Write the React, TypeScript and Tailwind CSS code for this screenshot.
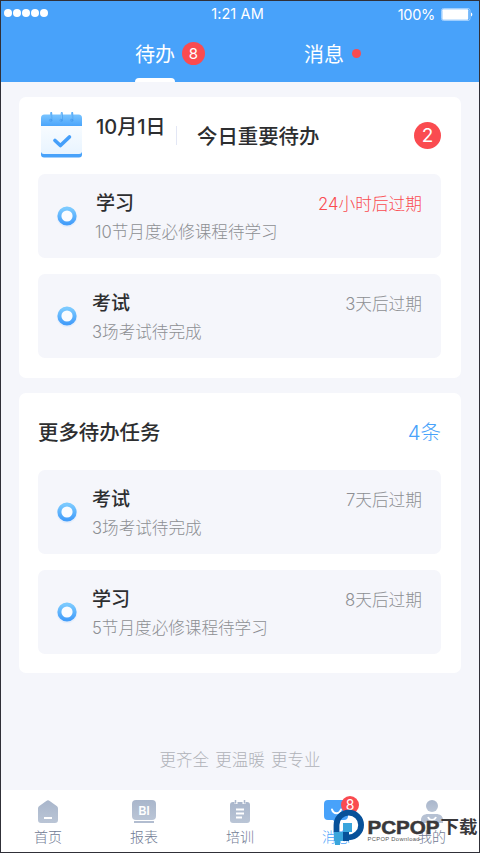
type Task = {
  title: string;
  desc: string;
  due: string;
  urgent?: boolean;
  indent?: boolean;
};

const TODAY: Task[] = [
  {
    title: "学习",
    desc: "10节月度必修课程待学习",
    due: "24小时后过期",
    urgent: true,
    indent: true,
  },
  { title: "考试", desc: "3场考试待完成", due: "3天后过期" },
];

const MORE: Task[] = [
  { title: "考试", desc: "3场考试待完成", due: "7天后过期" },
  { title: "学习", desc: "5节月度必修课程待学习", due: "8天后过期" },
];

const StatusBar = () => (
  <div className="grid h-[22px] grid-cols-3 items-center pl-[3px] pr-1.5 text-[15px] text-white">
    <div className="flex gap-px">
      {[0, 1, 2, 3, 4].map((i) => (
        <span key={i} className="h-2 w-2 rounded-full bg-white" />
      ))}
    </div>
    <span className="pr-0.5 text-center text-[14.5px] tracking-[0.1px]">1:21 AM</span>
    <div className="flex items-center justify-end gap-1.5 pt-[3px]">
      <span className="text-[14.5px] tracking-[-0.3px]">100%</span>
      <svg width="32" height="14" viewBox="0 0 32 14" aria-hidden="true">
        <rect x="0.5" y="0.5" width="28.5" height="12" rx="2" fill="none" stroke="#b5d9ff" strokeWidth="0.8" />
        <rect x="1.3" y="1.2" width="26" height="10.6" rx="1" fill="#fff" />
        <path d="M30 4.5c1.8.6 1.8 3.400 0 4z" fill="#fff" />
      </svg>
    </div>
  </div>
);

const CalendarIcon = () => (
  <svg width="42" height="46" viewBox="0 0 42 46" aria-hidden="true">
    <defs>
      <linearGradient id="calTop" x1="0" y1="0" x2="0" y2="1">
        <stop offset="0" stopColor="#79c4ff" />
        <stop offset="1" stopColor="#4ba5fb" />
      </linearGradient>
      <linearGradient id="calBody" x1="0" y1="0" x2="0" y2="1">
        <stop offset="0" stopColor="#f8fcff" />
        <stop offset="1" stopColor="#e8f4ff" />
      </linearGradient>
    </defs>
    <path d="M0 40h41v2.500a3 3 0 0 1-3 3H3a3 3 0 0 1-3-3z" fill="#48a2fa" />
    <path d="M0 13h41v26a3 3 0 0 1-3 3H3a3 3 0 0 1-3-3z" fill="url(#calBody)" />
    <path d="M0 14V6a3.500 3.500 0 0 1 3.500-3.500h34A3.500 3.500 0 0 1 41 6v8z" fill="url(#calTop)" />
    {[8, 18.5, 29].map((x) => (
      <g key={x} transform={`translate(${x} 0)`} fill="none" strokeLinecap="round">
        <path d="M2.300 1v7.500" stroke="#4a9ff0" strokeWidth="1.800" />
        <path d="M1.900 1v5.500" stroke="#74c0ff" strokeWidth="1.300" />
        <circle cx="1.600" cy="8.300" r="1.200" stroke="#4a9ff0" strokeWidth="0.700" />
      </g>
    ))}
    <path d="M14 28.500l5.400 5 9-8.500" fill="none" stroke="#459ffa" strokeWidth="3.700" strokeLinejoin="round" strokeLinecap="round" />
  </svg>
);

const Ring = () => (
  <svg width="24" height="24" viewBox="0 0 24 24" aria-hidden="true">
    <defs>
      <linearGradient id="ring" x1="0" y1="0" x2="0" y2="1">
        <stop offset="0" stopColor="#7bcaff" />
        <stop offset="1" stopColor="#449efa" />
      </linearGradient>
    </defs>
    <circle cx="12" cy="13" r="8.500" fill="none" stroke="#449efa" strokeOpacity="0.080" strokeWidth="3.500" />
    <circle cx="12" cy="12" r="7.600" fill="#fafcff" stroke="url(#ring)" strokeWidth="4" />
  </svg>
);

const TaskRow = ({ task }: { task: Task }) => (
  <div className="flex h-[84px] items-start rounded-[7px] bg-[#f5f6fb] pl-[17px] pr-[19px]">
    <div className="pt-[30px]">
      <Ring />
    </div>
    <div className="ml-[13px] flex-1 pt-4">
      <div className="flex items-center justify-between">
        <h3
          className={`text-[19px] font-medium leading-7 text-[#2d2e30] ${task.indent ? "pl-1" : ""}`}
        >
          {task.title}
        </h3>
        <span
          className={`text-[16.7px] font-light leading-7 ${task.urgent ? "text-[#fa4b50]" : "text-[#8d8f93]"}`}
        >
          {task.due}
        </span>
      </div>
      <p
        className={`text-[16.6px] font-light leading-[29px] text-[#8d8f93] ${task.indent ? "pl-[3px]" : ""}`}
      >
        {task.desc}
      </p>
    </div>
  </div>
);

const HomeIcon = () => (
  <svg width="24" height="24" viewBox="0 0 24 24" aria-hidden="true">
    <path d="M10.300 1a2.800 2.800 0 0 1 3.400 0l7 5A3 3 0 0 1 22 8.500V20a3 3 0 0 1-3 3H5a3 3 0 0 1-3-3V8.500A3 3 0 0 1 3.300 6z" fill="url(#nav)" />
    <path d="M8 18h8" stroke="#fff" strokeWidth="2" />
  </svg>
);

const ReportIcon = () => (
  <svg width="24" height="24" viewBox="0 0 24 24" aria-hidden="true">
    <rect x="0" y="0" width="24" height="20" rx="4" fill="url(#nav)" />
    <rect x="2" y="21" width="20" height="2" fill="#b2bdd0" />
    <text x="12" y="14.800" textAnchor="middle" fontFamily="Liberation Sans" fontSize="13" fontWeight="bold" textLength="11" lengthAdjust="spacingAndGlyphs" fill="#fff">
      BI
    </text>
  </svg>
);

const TrainingIcon = () => (
  <svg width="24" height="24" viewBox="0 0 24 24" aria-hidden="true">
    <rect x="2" y="2" width="20" height="21" rx="3" fill="url(#nav)" />
    <path d="M8 0v4M16 0v4" stroke="#fff" strokeWidth="3" />
    <path d="M7.500 0v3.500M16.500 0v3.500" stroke="#acb8cc" strokeWidth="1.500" />
    <path d="M8 9.500h8M8 13.500h8M8 17.500h6" stroke="#fff" strokeWidth="1.800" />
  </svg>
);

const MessageIcon = () => (
  <svg width="24" height="24" viewBox="0 0 24 24" aria-hidden="true">
    <path d="M4 0h16a4 4 0 0 1 4 4v12a4 4 0 0 1-4 4h-5l-3 3-3-3H4a4 4 0 0 1-4-4V4a4 4 0 0 1 4-4z" fill="#48a2fa" />
    <path d="M8 9.500c1.500 5 7.500 5 9 0" fill="none" stroke="#fff" strokeWidth="2" strokeLinecap="round" />
  </svg>
);

const ProfileIcon = () => (
  <svg width="24" height="24" viewBox="0 0 24 24" aria-hidden="true">
    <circle cx="12" cy="6" r="6" fill="url(#nav)" />
    <path d="M1 23v-3c0-4 3-6 7-6h8c4 0 7 2 7 6v3z" fill="#b6c1d3" />
    <path d="M8 17c1.500 4 6.500 4 8 0" fill="none" stroke="#fff" strokeWidth="1.800" />
  </svg>
);

const NAV = [
  { label: "首页", icon: HomeIcon },
  { label: "报表", icon: ReportIcon },
  { label: "培训", icon: TrainingIcon },
  { label: "消息", icon: MessageIcon, active: true, badge: 8 },
  { label: "我的", icon: ProfileIcon },
];

const TabBar = () => (
  <nav className="-mx-px grid h-[62px] grid-cols-5 bg-white pt-2.5">
    {NAV.map(({ label, icon: Icon, active, badge }) => (
      <div key={label} className="flex flex-col items-center">
        <div className="relative">
          <Icon />
          {badge && (
            <span className="absolute -top-[4px] left-[17px] flex h-[18px] w-[18px] items-center justify-center rounded-full bg-[#fa4b50] text-sm text-white">
              {badge}
            </span>
          )}
        </div>
        <span
          className={`text-[14px] font-light leading-[26px] ${active ? "text-[#48a2fa]" : "text-[#717b94]"}`}
        >
          {label}
        </span>
      </div>
    ))}
  </nav>
);

const Watermark = () => (
  <svg
    className="absolute bottom-0 right-0"
    width="150"
    height="50"
    viewBox="329 802 150 50"
    aria-hidden="true"
  >
    <path d="M336.500 832V825a12.300 12.300 0 1 1 12.500 12.300" fill="none" stroke="#07519a" strokeWidth="5.800" />
    <rect x="343" y="823" width="9" height="9" fill="#3aa5dc" />
    <rect x="334" y="832" width="9" height="9" fill="#3aa5dc" />
    <rect x="343" y="832" width="6" height="9" fill="#07519a" />
    <rect x="335" y="841" width="5" height="4" fill="#3aa5dc" />
    <text x="367.500" y="833.500" textLength="72" lengthAdjust="spacingAndGlyphs" fontFamily="Liberation Sans" fontWeight="bold" fontSize="17.500" fill="#39383a" stroke="#39383a" strokeWidth="0.500">
      PCPOP
    </text>
    <text x="440.500" y="832.500" textLength="37" lengthAdjust="spacingAndGlyphs" fontFamily="Noto Sans CJK SC" fontWeight="bold" fontSize="17" fill="#39383a">
      下载
    </text>
    <text x="367.500" y="840.500" textLength="52" lengthAdjust="spacing" fontFamily="Liberation Sans" fontSize="5.800" fill="#555">
      PCPOP Download
    </text>
  </svg>
);

export default function App() {
  return (
    <div className="relative flex h-[853px] w-[480px] flex-col overflow-hidden border border-[#303038] bg-[#f5f6fb] font-['Inter','Noto_Sans_CJK_SC',sans-serif]">
      {/* Shared gradient for the inactive tab icons */}
      <svg width="0" height="0" className="absolute" aria-hidden="true">
        <linearGradient id="nav" x1="0" y1="0" x2="0" y2="1">
          <stop offset="0" stopColor="#a9b6cb" />
          <stop offset="1" stopColor="#bac5d6" />
        </linearGradient>
      </svg>

      <header className="h-[81px] bg-[#48a2fa]">
        <StatusBar />
        <div className="flex h-[59px] pl-[134px] text-[20px] text-white">
          <div className="flex w-[169px] gap-[7px]">
            <div className="flex w-10 flex-col justify-between">
              <span className="pt-4 leading-8">待办</span>
              <span className="h-1 rounded-t-sm bg-white" />
            </div>
            <span className="mt-[19px] flex h-[23px] w-[23px] items-center justify-center rounded-full bg-[#fa4b50] pt-px text-[15px]">
              8
            </span>
          </div>
          <div className="flex items-start gap-2">
            <span className="pt-4 leading-8">消息</span>
            <span className="mt-[26px] h-[9px] w-[9px] rounded-full bg-[#fa4b50]" />
          </div>
        </div>
      </header>

      <main className="flex-1 px-[18px] pt-[15px]">
        <section className="h-[281px] rounded-[7px] bg-white pl-[19px] pr-5">
          <div className="flex h-[77px] items-start">
            <div className="ml-[3px] mt-[15px]">
              <CalendarIcon />
            </div>
            <span className="ml-[13px] mt-4 w-[80px] whitespace-nowrap text-[20px] font-medium leading-7 text-[#2d2e30]">
              10月1日
            </span>
            <span className="mt-[29px] h-[19px] w-px bg-[#e3e7f5]" />
            <h2 className="ml-5 mt-6 flex-1 text-[20.4px] font-medium leading-8 text-[#2d2e30]">
              今日重要待办
            </h2>
            <span className="mt-[25px] flex h-[27px] w-[27px] items-center justify-center rounded-full bg-[#fa4b50] pt-0.5 text-[19px] text-white">
              2
            </span>
          </div>
          <div className="flex flex-col gap-4">
            {TODAY.map((task) => (
              <TaskRow key={task.due} task={task} />
            ))}
          </div>
        </section>

        <section className="mt-[15px] h-[280px] rounded-[7px] bg-white pl-[19px] pr-5">
          <div className="flex h-[77px] items-center justify-between pt-[3px]">
            <h2 className="text-[20.4px] font-medium text-[#2d2e30]">更多待办任务</h2>
            <span className="text-[20.4px] font-light text-[#48a2fa]">4条</span>
          </div>
          <div className="flex flex-col gap-4">
            {MORE.map((task) => (
              <TaskRow key={task.due} task={task} />
            ))}
          </div>
        </section>

        <p className="mt-[75px] text-center text-[16.5px] font-light leading-6 text-[#b0b2b8] [word-spacing:1.5px]">
          更齐全 更温暖 更专业
        </p>
      </main>

      <TabBar />
      <Watermark />
    </div>
  );
}
